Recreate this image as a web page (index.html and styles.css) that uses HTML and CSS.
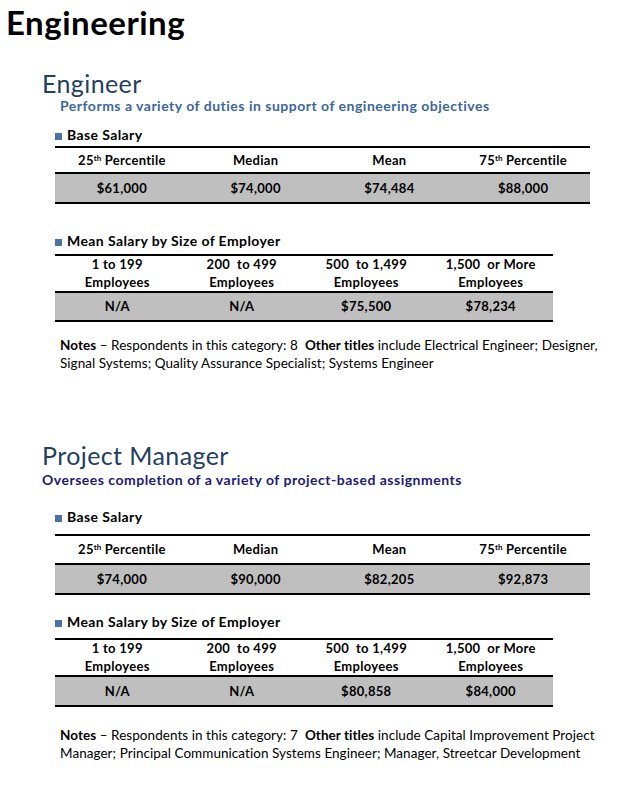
FILE: index.html
```html
<!DOCTYPE html>
<html lang="en">
<head>
<meta charset="utf-8">
<title>Engineering</title>
<link rel="stylesheet" href="styles.css">
</head>
<body>
<main class="page">
  <h1 class="page-title">Engineering</h1>

  <section class="job job-first">
    <h2 class="job-title">Engineer</h2>
    <p class="job-desc desc-light">Performs a variety of duties in support of engineering objectives</p>

    <h3 class="block-title bt-base1"><span class="bullet"></span>Base Salary</h3>
    <div class="stat-table wide t1">
      <div class="stat-row head">
        <div class="cell">25<sup>th</sup> Percentile</div>
        <div class="cell">Median</div>
        <div class="cell">Mean</div>
        <div class="cell">75<sup>th</sup> Percentile</div>
      </div>
      <div class="stat-row data">
        <div class="cell">$61,000</div>
        <div class="cell">$74,000</div>
        <div class="cell">$74,484</div>
        <div class="cell">$88,000</div>
      </div>
    </div>

    <h3 class="block-title bt-size1"><span class="bullet"></span>Mean Salary by Size of Employer</h3>
    <div class="stat-table narrow t2">
      <div class="stat-row head two">
        <div class="cell">1 to 199<br>Employees</div>
        <div class="cell">200&nbsp; to 499<br>Employees</div>
        <div class="cell">500&nbsp; to 1,499<br>Employees</div>
        <div class="cell">1,500&nbsp; or More<br>Employees</div>
      </div>
      <div class="stat-row data">
        <div class="cell">N/A</div>
        <div class="cell">N/A</div>
        <div class="cell">$75,500</div>
        <div class="cell">$78,234</div>
      </div>
    </div>

    <p class="notes notes1"><b>Notes</b> – Respondents in this category: 8&nbsp; <b>Other titles</b> include Electrical Engineer; Designer,<br>Signal Systems; Quality Assurance Specialist; Systems Engineer</p>
  </section>

  <section class="job job-second">
    <h2 class="job-title">Project Manager</h2>
    <p class="job-desc desc-dark">Oversees completion of a variety of project-based assignments</p>

    <h3 class="block-title bt-base2"><span class="bullet"></span>Base Salary</h3>
    <div class="stat-table wide t3">
      <div class="stat-row head">
        <div class="cell">25<sup>th</sup> Percentile</div>
        <div class="cell">Median</div>
        <div class="cell">Mean</div>
        <div class="cell">75<sup>th</sup> Percentile</div>
      </div>
      <div class="stat-row data">
        <div class="cell">$74,000</div>
        <div class="cell">$90,000</div>
        <div class="cell">$82,205</div>
        <div class="cell">$92,873</div>
      </div>
    </div>

    <h3 class="block-title bt-size2"><span class="bullet"></span>Mean Salary by Size of Employer</h3>
    <div class="stat-table narrow t4">
      <div class="stat-row head two">
        <div class="cell">1 to 199<br>Employees</div>
        <div class="cell">200&nbsp; to 499<br>Employees</div>
        <div class="cell">500&nbsp; to 1,499<br>Employees</div>
        <div class="cell">1,500&nbsp; or More<br>Employees</div>
      </div>
      <div class="stat-row data">
        <div class="cell">N/A</div>
        <div class="cell">N/A</div>
        <div class="cell">$80,858</div>
        <div class="cell">$84,000</div>
      </div>
    </div>

    <p class="notes notes2"><b>Notes</b> – Respondents in this category: 7&nbsp; <b>Other titles</b> include Capital Improvement Project<br>Manager; Principal Communication Systems Engineer; Manager, Streetcar Development</p>
  </section>
</main>
</body>
</html>
```

FILE: styles.css
```css
html, body {
  margin: 0;
  padding: 0;
  background: #ffffff;
}

body {
  font-family: Lato, "Open Sans", "Liberation Sans", sans-serif;
  color: #000000;
  width: 635px;
}

.page {
  display: flex;
  flex-direction: column;
  align-items: flex-start;
}

.page-title {
  margin: 3px 0 0 6px;
  font-size: 33px;
  line-height: 38px;
  font-weight: 700;
  letter-spacing: 0.5px;
  color: #000;
}

.job {
  display: flex;
  flex-direction: column;
  align-items: flex-start;
}

.job-first { margin-top: 28px; }
.job-second { margin-top: 69px; }

.job-title {
  margin: 0 0 0 42px;
  font-size: 25px;
  line-height: 28px;
  font-weight: 400;
  letter-spacing: 0.4px;
  color: #243f60;
}

.job-desc {
  margin: 0;
  font-size: 14px;
  line-height: 18px;
  font-weight: 700;
  letter-spacing: 0.5px;
}

.desc-light {
  margin-left: 60px;
  color: #3a66a0;
}

.desc-dark {
  margin-left: 42px;
  margin-top: 2px;
  color: #1b1a78;
}

.block-title {
  display: flex;
  align-items: center;
  gap: 5px;
  margin: 0 0 0 55px;
  font-size: 14px;
  line-height: 18px;
  font-weight: 700;
  letter-spacing: 0.4px;
  color: #000;
}

.bullet {
  width: 7px;
  height: 7px;
  background: #4a72a8;
  flex: none;
  position: relative;
  top: 1px;
}

.bt-base1 { margin-top: 11px; }
.bt-size1 { margin-top: 28px; }
.bt-base2 { margin-top: 19px; }
.bt-size2 { margin-top: 18px; }

.stat-table {
  margin-left: 55px;
  border-top: 2px solid #000;
  border-bottom: 2px solid #000;
  font-size: 13px;
  font-weight: 700;
  letter-spacing: 0.3px;
}

.stat-table.wide { width: 535px; }
.stat-table.narrow { width: 498px; }

.t1 { margin-top: 2px; }
.t2 { margin-top: 4px; }
.t3 { margin-top: 8px; }
.t4 { margin-top: 7px; }

.stat-row {
  display: grid;
  grid-template-columns: repeat(4, 1fr);
}

.stat-row .cell {
  text-align: center;
}

.stat-row.head {
  border-bottom: 2px solid #000;
  line-height: 24px;
}

.t3 .stat-row.head { line-height: 27px; }

.stat-row.head.two {
  line-height: 17.5px;
}

.stat-row.data {
  background: #bfbfbf;
  line-height: 28px;
}

.t2 .stat-row.data { line-height: 27px; }

sup {
  font-size: 8px;
  line-height: 0;
  letter-spacing: 0;
  vertical-align: 4px;
}

.notes {
  margin: 0 0 0 60px;
  font-size: 13.5px;
  line-height: 17.5px;
  letter-spacing: 0.05px;
  color: #000;
}

.notes b { font-weight: 700; }

.notes1 { margin-top: 15px; }
.notes2 { margin-top: 20px; }
```
